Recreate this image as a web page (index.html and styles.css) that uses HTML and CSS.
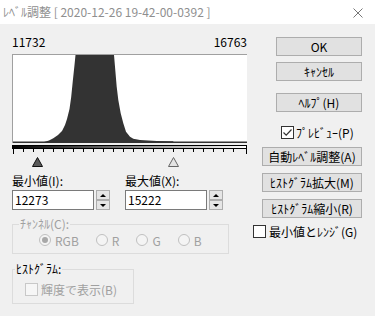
FILE: index.html
```html
<!DOCTYPE html>
<html lang="ja">
<head>
    <meta charset="UTF-8">
    <title>ﾚﾍﾞﾙ調整</title>
    <link rel="stylesheet" href="styles.css">
</head>
<body>
    <div class="window">
        <div class="titlebar">
            <span class="title">ﾚﾍﾞﾙ調整 [ 2020-12-26 19-42-00-0392 ]</span>
            <svg class="close" width="10" height="10" viewBox="0 0 10 10">
                <path d="M0.5 0.5 L9.5 9.5 M9.5 0.5 L0.5 9.5" stroke="#777" stroke-width="1" fill="none"/>
            </svg>
        </div>

        <div class="content">
            <div class="left">
                <div class="range">
                    <span>11732</span>
                    <span>16763</span>
                </div>

                <div class="hist">
                    <svg width="234" height="88" viewBox="0 0 234 88">
                        <path d="M31 87 L36 85.5 L40.3 83.3 L45 80 L49 76 L52 70 L54 64 L56.5 54 L58.2 42 L59.8 26 L61.5 10 L62.5 0 L101 0 L102 11.7 L103.7 31.7 L105.3 45 L107.7 58.3 L110.3 68.3 L113 76.7 L117 81.7 L120.3 83.7 L127 85 L143.7 86 L160.3 86.3 L160.3 87 Z" fill="#333"/>
                        <rect x="0" y="86.5" width="234" height="1.5" fill="#333"/>
                    </svg>
                </div>

                <svg class="slider" width="236" height="23" viewBox="0 0 236 23">
                    <defs>
                        <linearGradient id="grad" x1="0" x2="1" y1="0" y2="0">
                            <stop offset="0" stop-color="#000"/>
                            <stop offset="1" stop-color="#fff"/>
                        </linearGradient>
                    </defs>
                    <rect x="0.5" y="0.5" width="234" height="3" fill="url(#grad)" stroke="#000"/>
                    <g stroke="#000" stroke-width="1">
                        <path d="M1.5 3.5 V9"/>
                        <path d="M11.5 3.5 V7 M21.5 3.5 V7 M31.5 3.5 V7 M41.5 3.5 V7 M51.5 3.5 V7 M61.5 3.5 V7 M71.5 3.5 V7 M81.5 3.5 V7 M91.5 3.5 V7 M101.5 3.5 V7 M111.5 3.5 V7 M121.5 3.5 V7 M131.5 3.5 V7 M141.5 3.5 V7 M151.5 3.5 V7 M161.5 3.5 V7 M171.5 3.5 V7 M181.5 3.5 V7 M191.5 3.5 V7 M201.5 3.5 V7 M211.5 3.5 V7 M221.5 3.5 V7"/>
                        <path d="M234.5 3.5 V9"/>
                    </g>
                    <polygon points="25.5,12.5 20.5,21.5 30.5,21.5" fill="#5a5a5a" stroke="#111"/>
                    <polygon points="161.5,12.5 156.5,21.5 166.5,21.5" fill="#e4e4e4" stroke="#666"/>
                </svg>

                <div class="fields">
                    <div class="field">
                        <div class="field-label">最小値(I):</div>
                        <div class="field-row">
                            <div class="input">12273</div>
                            <div class="spin">
                                <span class="spin-btn up"></span>
                                <span class="spin-btn down"></span>
                            </div>
                        </div>
                    </div>
                    <div class="field">
                        <div class="field-label">最大値(X):</div>
                        <div class="field-row">
                            <div class="input">15222</div>
                            <div class="spin">
                                <span class="spin-btn up"></span>
                                <span class="spin-btn down"></span>
                            </div>
                        </div>
                    </div>
                </div>

                <div class="group channel">
                    <div class="group-label disabled">ﾁｬﾝﾈﾙ(C):</div>
                    <div class="radio-row">
                        <span class="radio-item"><span class="radio checked"></span>RGB</span>
                        <span class="radio-item"><span class="radio"></span>R</span>
                        <span class="radio-item"><span class="radio"></span>G</span>
                        <span class="radio-item"><span class="radio"></span>B</span>
                    </div>
                </div>

                <div class="group hgroup">
                    <div class="group-label">ﾋｽﾄｸﾞﾗﾑ:</div>
                    <div class="check-row disabled">
                        <span class="check off"></span>輝度で表示(B)
                    </div>
                </div>
            </div>

            <div class="right">
                <button class="btn small btn-ok">OK</button>
                <button class="btn small btn-cancel">ｷｬﾝｾﾙ</button>
                <button class="btn small btn-help">ﾍﾙﾌﾟ(H)</button>
                <div class="preview">
                    <span class="check">
                        <svg width="11" height="11" viewBox="0 0 11 11">
                            <path d="M1.5 5.5 L4.2 8.2 L9.5 2.5" stroke="#333" stroke-width="1.2" fill="none"/>
                        </svg>
                    </span>ﾌﾟﾚﾋﾞｭｰ(P)
                </div>
                <button class="btn wide btn-auto">自動ﾚﾍﾞﾙ調整(A)</button>
                <button class="btn wide btn-zoom">ﾋｽﾄｸﾞﾗﾑ拡大(M)</button>
                <button class="btn wide btn-zoom">ﾋｽﾄｸﾞﾗﾑ縮小(R)</button>
                <div class="minrange">
                    <span class="check"></span>最小値とﾚﾝｼﾞ(G)
                </div>
            </div>
        </div>
    </div>
</body>
</html>
```

FILE: styles.css
```css
html, body {
    margin: 0;
    padding: 0;
}

body {
    width: 375px;
    height: 316px;
    overflow: hidden;
    font-family: "Noto Sans CJK JP", "Noto Sans", sans-serif;
    font-size: 12px;
    color: #000;
    background-color: #f0f0f0;
}

.titlebar {
    height: 24px;
    background-color: #fff;
    display: flex;
    align-items: center;
    justify-content: space-between;
}

.title {
    margin-left: 3px;
    color: #8f8f8f;
    line-height: 14px;
}

.close {
    margin-right: 12px;
    margin-top: 1px;
}

.content {
    display: flex;
    padding-left: 12px;
}

.left {
    width: 236px;
}

.range {
    margin-top: 11px;
    width: 235px;
    line-height: 14px;
    display: flex;
    justify-content: space-between;
}

.hist {
    margin-top: 5px;
    width: 234px;
    height: 88px;
    background-color: #fff;
    border-top: 1px solid #a0a0a0;
    border-left: 1px solid #a0a0a0;
}

.hist svg {
    display: block;
}

.slider {
    display: block;
    margin-top: 2px;
}

.fields {
    margin-top: 6px;
    display: flex;
    gap: 15px;
}

.field {
    width: 98px;
}

.field-label {
    line-height: 14px;
    margin-bottom: 2px;
}

.field-row {
    display: flex;
    align-items: flex-start;
}

.input {
    width: 80px;
    height: 18px;
    line-height: 18px;
    padding-left: 2px;
    background-color: #fff;
    border: 1px solid #7a7a7a;
}

.spin {
    margin-left: 2px;
    display: flex;
    flex-direction: column;
}

.spin-btn {
    width: 12px;
    height: 8px;
    border: 1px solid #adadad;
    background-color: #e5e5e5;
    display: flex;
    align-items: center;
    justify-content: center;
}

.spin-btn::after {
    content: "";
    border-left: 3px solid transparent;
    border-right: 3px solid transparent;
}

.spin-btn.up::after {
    border-bottom: 3px solid #000;
}

.spin-btn.down::after {
    border-top: 3px solid #000;
}

.group {
    border: 1px solid #dcdcdc;
}

.group-label {
    width: max-content;
    margin-top: -8px;
    padding: 0 1px;
    line-height: 14px;
    background-color: #f0f0f0;
}

.disabled {
    color: #a0a0a0;
}

.channel {
    margin-top: 14px;
    width: 215px;
    height: 28px;
}

.channel .group-label {
    margin-left: 6px;
}

.radio-row {
    display: flex;
    align-items: center;
    height: 18px;
    padding-left: 26px;
    color: #a0a0a0;
}

.radio-item {
    display: flex;
    align-items: center;
    margin-right: 17px;
}

.radio {
    width: 10px;
    height: 10px;
    border: 1px solid #c0c0c0;
    border-radius: 50%;
    background-color: #f4f4f4;
    margin-right: 4px;
    display: flex;
    align-items: center;
    justify-content: center;
}

.radio.checked::after {
    content: "";
    width: 6px;
    height: 6px;
    border-radius: 50%;
    background-color: #a8a8a8;
}

.hgroup {
    margin-top: 15px;
    width: 120px;
    height: 33px;
}

.hgroup .group-label {
    margin-left: 2px;
}

.check-row {
    display: flex;
    align-items: center;
    height: 18px;
    margin-top: 4px;
    padding-left: 12px;
}

.check {
    width: 11px;
    height: 11px;
    border: 1px solid #333;
    background-color: #fff;
    margin-right: 3px;
    display: inline-flex;
    align-items: center;
    justify-content: center;
    flex-shrink: 0;
}

.check.off {
    border-color: #c8c8c8;
    background-color: #f6f6f6;
}

.right {
    margin-left: 5px;
    width: 109px;
    display: flex;
    flex-direction: column;
    align-items: flex-start;
}

.btn {
    font-family: inherit;
    font-size: 12px;
    color: #000;
    background-color: #e1e1e1;
    border: 1px solid #adadad;
    border-radius: 0;
    padding: 0;
    height: 19px;
    line-height: 17px;
    margin: 0;
}

.btn.small {
    width: 86px;
    margin-left: 23px;
}

.btn.wide {
    width: 100px;
    margin-left: 9px;
}

.btn-ok {
    margin-top: 13px;
}

.btn-cancel {
    margin-top: 6px;
}

.btn-help {
    margin-top: 12px;
}

.preview {
    margin-top: 14px;
    margin-left: 28px;
    height: 13px;
    display: flex;
    align-items: center;
    line-height: 14px;
}

.preview .check {
    margin-right: 2px;
}

.btn-auto {
    margin-top: 8px;
}

.btn-zoom {
    margin-top: 7px;
}

.minrange {
    margin-top: 7px;
    height: 13px;
    display: flex;
    align-items: center;
    line-height: 14px;
}
```
